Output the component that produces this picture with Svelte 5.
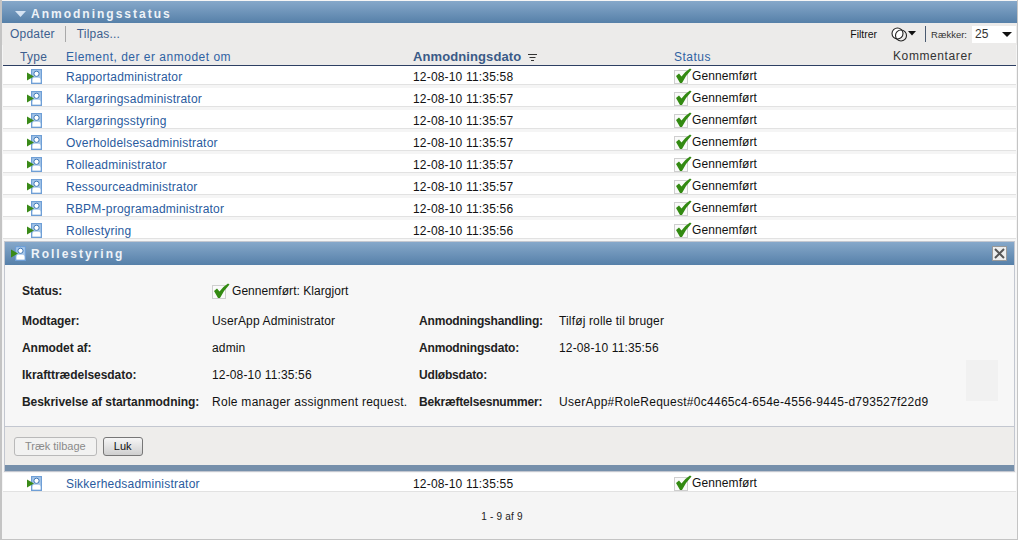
<script lang="ts">
	const rowsAbove = [
		{ name: 'Rapportadministrator', date: '12-08-10 11:35:58' },
		{ name: 'Klargøringsadministrator', date: '12-08-10 11:35:57' },
		{ name: 'Klargøringsstyring', date: '12-08-10 11:35:57' },
		{ name: 'Overholdelsesadministrator', date: '12-08-10 11:35:57' },
		{ name: 'Rolleadministrator', date: '12-08-10 11:35:57' },
		{ name: 'Ressourceadministrator', date: '12-08-10 11:35:57' },
		{ name: 'RBPM-programadministrator', date: '12-08-10 11:35:56' },
		{ name: 'Rollestyring', date: '12-08-10 11:35:56' }
	];
	const rowsBelow = [{ name: 'Sikkerhedsadministrator', date: '12-08-10 11:35:55' }];

	const details = [
		['Modtager:', 'UserApp Administrator', 'Anmodningshandling:', 'Tilføj rolle til bruger'],
		['Anmodet af:', 'admin', 'Anmodningsdato:', '12-08-10 11:35:56'],
		['Ikrafttrædelsesdato:', '12-08-10 11:35:56', 'Udløbsdato:', ''],
		[
			'Beskrivelse af startanmodning:',
			'Role manager assignment request.',
			'Bekræftelsesnummer:',
			'UserApp#RoleRequest#0c4465c4-654e-4556-9445-d793527f22d9'
		]
	];
</script>

{#snippet roleIcon()}
	<svg class="role-icon" width="15" height="15" viewBox="0 0 15 15">
		<rect x="4.6" y="0.6" width="9.8" height="13.8" fill="#a9c8ea" stroke="#6f9fd6" stroke-width="1.2" />
		<circle cx="9.5" cy="4.8" r="2.6" fill="#fff" stroke="#2f6cb0" stroke-width="0.9" />
		<path d="M5.5 13.5 V10.8 Q5.5 8.8 7.5 8.8 H11.5 Q13.5 8.8 13.5 10.8 V13.5 Z" fill="#fff" />
		<path d="M0 3.5 L7 7.5 L0 11.5 Z" fill="#3a8a18" />
	</svg>
{/snippet}

{#snippet checkIcon()}
	<svg class="check-icon" width="18" height="16" viewBox="0 0 18 16">
		<rect x="0.5" y="2.5" width="13" height="13" fill="#fafafa" stroke="#cfcfcf" />
		<path d="M2 8 L5 5.5 L7.5 8.5 Q11 3.5 16 0.5 L17.5 1.5 Q12 7 8 15 L6 15 Z" fill="#338a12" />
	</svg>
{/snippet}

{#snippet row(item: { name: string; date: string })}
	<div class="row">
		<span class="type-cell">{@render roleIcon()}</span>
		<a href="#top" class="name">{item.name}</a>
		<span class="date">{item.date}</span>
		<span class="status">{@render checkIcon()}Gennemført</span>
	</div>
{/snippet}

<div class="frame">
	<header class="title-bar">
		<svg width="11" height="6" viewBox="0 0 11 6"><path d="M0 0 H11 L5.5 6 Z" fill="#d5e3f2" /></svg>
		<h1>Anmodningsstatus</h1>
	</header>

	<div class="toolbar">
		<a href="#top">Opdater</a>
		<span class="sep"></span>
		<a href="#top">Tilpas...</a>
		<div class="tools">
			<span class="filter">Filtrer</span>
			<svg class="circles" width="26" height="15" viewBox="0 0 26 15">
				<circle cx="6.5" cy="6.5" r="5.5" fill="#fff" stroke="#222" stroke-width="1.1" />
				<circle cx="10" cy="8.5" r="5.5" fill="none" stroke="#222" stroke-width="1.1" />
				<path d="M17 4 H25 L21 8.5 Z" fill="#111" />
			</svg>
			<span class="sep dark"></span>
			<span class="rows-label">Rækker:</span>
			<div class="select">
				<span>25</span>
				<svg width="10" height="5" viewBox="0 0 10 5"><path d="M0 0 H10 L5 5 Z" fill="#111" /></svg>
			</div>
		</div>
	</div>

	<div class="head">
		<span class="th type">Type</span>
		<span class="th">Element, der er anmodet om</span>
		<span class="th sorted">
			Anmodningsdato
			<svg width="9" height="7" viewBox="0 0 9 7"><path d="M0 0.5 H9 M1.5 3.5 H7.5 M3 6.5 H6" stroke="#333" /></svg>
		</span>
		<span class="th">Status</span>
		<span class="th comments">Kommentarer</span>
	</div>

	{#each rowsAbove as item}
		{@render row(item)}
	{/each}

	<section class="panel">
		<div class="panel-title">
			{@render roleIcon()}
			<h2>Rollestyring</h2>
			<button class="close" aria-label="Luk">
				<svg width="11" height="11" viewBox="0 0 11 11"><path d="M1 1 L10 10 M10 1 L1 10" stroke="#555" stroke-width="2" /></svg>
			</button>
		</div>
		<div class="panel-body">
			<div class="status-line">
				<b>Status:</b>
				<span class="status-value">{@render checkIcon()}Gennemført: Klargjort</span>
			</div>
			{#each details as d}
				<div class="detail" class:long={d[3].length > 30}>
					<b>{d[0]}</b>
					<span>{d[1]}</span>
					<b class="second">{d[2]}</b>
					<span>{d[3]}</span>
				</div>
			{/each}
			<div class="ghost"></div>
		</div>
		<div class="panel-actions">
			<button class="btn" disabled>Træk tilbage</button>
			<button class="btn primary">Luk</button>
		</div>
		<div class="panel-foot"></div>
	</section>

	{#each rowsBelow as item}
		{@render row(item)}
	{/each}

	<div class="pager">1 - 9 af 9</div>
</div>

<style>
	:global(body) {
		margin: 0;
		background: #fff;
		font-family: 'Liberation Sans', Arial, sans-serif;
		font-size: 12px;
		color: #111;
	}

	a {
		color: #2a5b9e;
		text-decoration: none;
	}

	.frame {
		box-sizing: border-box;
		width: 1018px;
		height: 540px;
		background: #f5f5f5;
		border: 1px solid #c4c4c4;
		border-top: 0;
		border-left-width: 2px;
		overflow: hidden;
	}

	.title-bar {
		box-sizing: border-box;
		height: 22px;
		margin-top: 1px;
		display: flex;
		align-items: center;
		gap: 5px;
		padding: 3px 0 0 13px;
		background: linear-gradient(#86a8ca, #5680a9);
	}

	.title-bar h1,
	.panel-title h2 {
		margin: 0;
		font-size: 12px;
		font-weight: bold;
		color: #eef3f8;
		letter-spacing: 2px;
	}

	.toolbar {
		height: 22px;
		display: flex;
		align-items: center;
		padding: 0 0 0 8px;
		background: #ecebea;
	}

	.toolbar a {
		color: #3d5f8f;
		letter-spacing: 0.2px;
	}

	.sep {
		width: 1px;
		height: 16px;
		margin: 0 11px 0 10px;
		background: #a9a9a9;
	}

	.tools {
		margin-left: auto;
		display: flex;
		align-items: center;
		font-size: 10px;
	}

	.filter {
		margin-right: 14px;
		font-size: 10.5px;
	}

	.sep.dark {
		margin: 0 5px 0 8px;
		background: #4a5a70;
	}

	.rows-label {
		color: #333;
		font-size: 9.5px;
		margin-right: 5px;
	}

	.select {
		box-sizing: border-box;
		width: 44px;
		height: 17px;
		padding: 0 4px 0 3px;
		display: flex;
		align-items: center;
		justify-content: space-between;
		background: #fff;
		font-size: 12px;
		color: #333;
		margin-right: 1px;
	}

	.head,
	.row {
		display: grid;
		grid-template-columns: 63px 347px 261px 219px 1fr;
		margin-left: 1px;
		margin-right: 1px;
	}

	.head {
		box-sizing: border-box;
		height: 21px;
		padding-top: 3px;
		align-items: center;
		background: #ecebea;
		border-bottom: 1px solid #2d3f63;
	}

	.th {
		color: #2f62a3;
		letter-spacing: 0.5px;
	}

	.th.type {
		padding-left: 17px;
		color: #3d5f8f;
		letter-spacing: 0.3px;
	}

	.th.sorted {
		color: #3a5a87;
		font-size: 13px;
		font-weight: bold;
		letter-spacing: 0.1px;
	}

	.th.sorted svg {
		margin-left: 3px;
	}

	.th.comments {
		color: #333;
		letter-spacing: 0.6px;
		margin-bottom: 2px;
	}

	.row {
		box-sizing: border-box;
		height: 22px;
		padding-top: 2px;
		align-items: center;
		background: #fff;
		border-bottom: 3px solid #f5f5f5;
		box-shadow: inset 0 -1px 0 #e2e2e2;
	}

	.type-cell {
		padding-left: 24px;
		display: flex;
		margin-top: -1px;
	}

	.name {
		letter-spacing: 0.22px;
	}

	.date {
		letter-spacing: 0.18px;
	}

	.status {
		display: flex;
		align-items: center;
		letter-spacing: 0.1px;
		margin-bottom: 2px;
	}

	.panel {
		margin: -1px 2px 1px 2px;
		border: 1px solid #c3c7d0;
		display: flex;
		flex-direction: column;
	}

	.panel-title {
		height: 23px;
		flex: none;
		display: flex;
		align-items: center;
		padding-left: 6px;
		gap: 5px;
		background: linear-gradient(#86a8ca, #5680a9);
	}

	.close {
		margin-left: auto;
		margin-right: 7px;
		width: 15px;
		height: 15px;
		padding: 0;
		display: flex;
		align-items: center;
		justify-content: center;
		background: #eee;
		border: 1px solid #999;
	}

	.panel-body {
		position: relative;
		box-sizing: border-box;
		height: 162px;
		padding: 12px 0 0 17px;
		background: #f7f7f7;
		border-bottom: 1px solid #c3c7d0;
	}

	.status-line {
		display: grid;
		grid-template-columns: 190px 1fr;
		height: 27px;
		align-items: center;
		margin-bottom: 3px;
	}

	.status-value {
		display: flex;
		align-items: center;
		gap: 2px;
		letter-spacing: 0.05px;
	}

	.detail {
		display: grid;
		grid-template-columns: 190px 207px 140px 1fr;
		height: 27px;
		align-items: center;
		letter-spacing: 0.15px;
	}

	.detail.long {
		letter-spacing: 0.27px;
	}

	b {
		color: #222;
		letter-spacing: -0.05px;
	}

	b.second {
		letter-spacing: -0.18px;
	}

	.ghost {
		position: absolute;
		left: 961px;
		top: 95px;
		width: 32px;
		height: 41px;
		background: #f1f1f1;
	}

	.panel-actions {
		box-sizing: border-box;
		height: 38px;
		flex: none;
		display: flex;
		align-items: center;
		gap: 6px;
		padding-left: 9px;
		background: #eeedeb;
	}

	.btn {
		height: 19px;
		padding: 0 10px;
		font: 11px 'Liberation Sans', Arial, sans-serif;
		color: #111;
		background: linear-gradient(#f6f6f6, #cfcfcf);
		border: 1px solid #777;
		border-radius: 3px;
	}

	.btn.primary {
		width: 40px;
	}

	.btn:disabled {
		color: #8a8a8a;
		background: #f2f2f1;
		border-color: #b9b9b9;
	}

	.panel-foot {
		height: 6px;
		flex: none;
		background: #7690ab;
	}

	.pager {
		text-align: center;
		font-size: 10px;
		padding: 16px 15px 0 0;
		letter-spacing: 0.2px;
		color: #222;
	}
</style>
